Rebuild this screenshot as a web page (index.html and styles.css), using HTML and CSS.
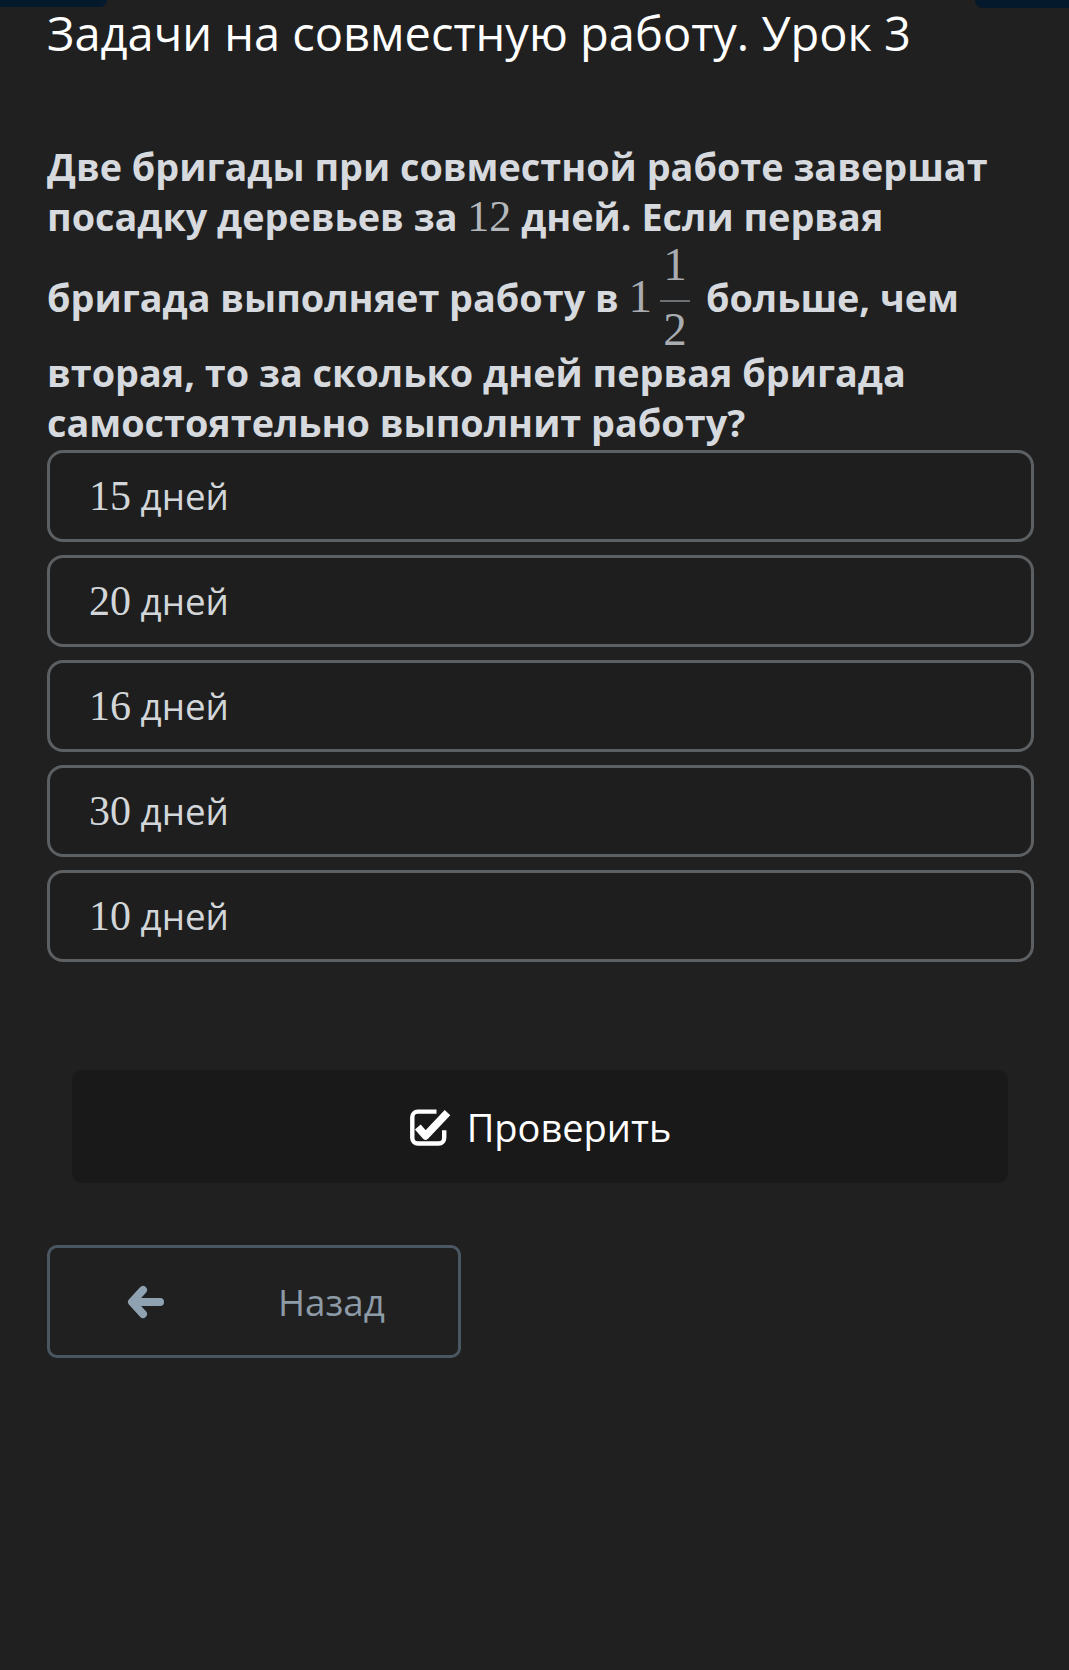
FILE: index.html
```html
<!DOCTYPE html>
<html lang="ru">
<head>
  <meta charset="UTF-8" />
  <meta name="viewport" content="width=device-width, initial-scale=1.0"/>
  <title>Задачи на совместную работу. Урок 3</title>
  <link rel="stylesheet" href="styles.css">
</head>
<body>
  <div class="topbar">
    <span class="tab tab-left"></span>
    <span class="tab tab-right"></span>
  </div>

  <main class="page">
    <h1 class="title">Задачи на совместную работу. Урок 3</h1>

    <p class="question">Две бригады при совместной работе завершат посадку деревьев за <span class="math">12</span> дней. Если первая бригада выполняет работу в <span class="math math-big">1</span><span class="frac"><span class="num">1</span><span class="bar"></span><span class="den">2</span></span> больше, чем вторая, то за сколько дней первая бригада самостоятельно выполнит работу?</p>

    <div class="answers">
      <div class="answer"><span class="math">15</span> дней</div>
      <div class="answer"><span class="math">20</span> дней</div>
      <div class="answer"><span class="math">16</span> дней</div>
      <div class="answer"><span class="math">30</span> дней</div>
      <div class="answer"><span class="math">10</span> дней</div>
    </div>

    <button class="btn-check">
      <svg class="icon-check" width="40" height="36" viewBox="0 0 40 36">
        <path d="M25 4 H8 a5 5 0 0 0 -5 5 V28 a5 5 0 0 0 5 5 H27 a5 5 0 0 0 5 -5 V21" fill="none" stroke="#fff" stroke-width="4"/>
        <polyline points="8,18 15,26 35,5" fill="none" stroke="#fff" stroke-width="7" stroke-linejoin="round"/>
      </svg>
      Проверить
    </button>

    <button class="btn-back">
      <svg class="icon-back" width="38" height="34" viewBox="0 0 38 34">
        <polyline points="16,5 5,17 16,29" fill="none" stroke="#8fa2b1" stroke-width="8" stroke-linecap="round" stroke-linejoin="round"/>
        <line x1="7" y1="17" x2="33" y2="17" stroke="#8fa2b1" stroke-width="8" stroke-linecap="round"/>
      </svg>
      <span>Назад</span>
    </button>
  </main>
</body>
</html>
```

FILE: styles.css
```css
body {
  margin: 0;
  padding: 0;
  background: #202020;
  color: #fff;
  font-family: "Open Sans", sans-serif;
}
.topbar {
  display: flex;
  justify-content: space-between;
  height: 7px;
}
.tab {
  background: #04192b;
  width: 107px;
  height: 7px;
}
.tab-left {
  border-bottom-right-radius: 8px;
}
.tab-right {
  width: 94px;
  height: 8px;
  border-bottom-left-radius: 8px;
}
.page {
  padding: 0 35px 200px 47px;
}
.title {
  margin: 0;
  font-size: 47px;
  font-weight: 400;
  line-height: 53px;
}
.question {
  margin: 82px 0 2px;
  padding-right: 8px;
  font-size: 37.8px;
  font-weight: 700;
  line-height: 50px;
  color: #d6d9dd;
}
.math {
  font-family: "Liberation Serif", serif;
  font-weight: 400;
  font-size: 44px;
  line-height: 40px;
  color: #b4b8bc;
}
.math-big {
  font-size: 47px;
  color: #a9adb1;
}
.frac {
  display: inline-flex;
  flex-direction: column;
  align-items: center;
  vertical-align: 32px;
  margin: 0 6px 0 8px;
  font-family: "Liberation Serif", serif;
  font-weight: 400;
  font-size: 47px;
  color: #a9adb1;
}
.num {
  line-height: 44px;
}
.den {
  line-height: 38px;
}
.bar {
  width: 30px;
  height: 2px;
  margin: 14px 0 8px;
  background: #6c7074;
}
.answers {
  display: flex;
  flex-direction: column;
  gap: 13px;
}
.answer {
  border: 3px solid #5d6063;
  border-radius: 16px;
  padding: 18px 39px;
  font-size: 36.75px;
  line-height: 50px;
  color: #d3d6d9;
  background: #1e1e1e;
}
.answer .math {
  font-size: 42px;
  color: #d3d6d9;
}
button {
  font-family: "Open Sans", sans-serif;
  cursor: pointer;
}
.btn-check {
  display: flex;
  justify-content: center;
  align-items: center;
  gap: 14px;
  width: calc(100% - 51px);
  height: 113px;
  margin: 108px 26px 0 25px;
  border: none;
  border-radius: 10px;
  background: #191919;
  color: #fff;
  font-size: 38px;
}
.btn-check .icon-check {
  width: 44px;
  height: 40px;
}
.btn-back {
  display: flex;
  align-items: center;
  gap: 113px;
  width: 414px;
  height: 113px;
  margin-top: 62px;
  padding: 0 0 0 77px;
  border: 3px solid #4a5762;
  border-radius: 10px;
  background: transparent;
  color: #8d9ba7;
  font-size: 36.75px;
}
```
